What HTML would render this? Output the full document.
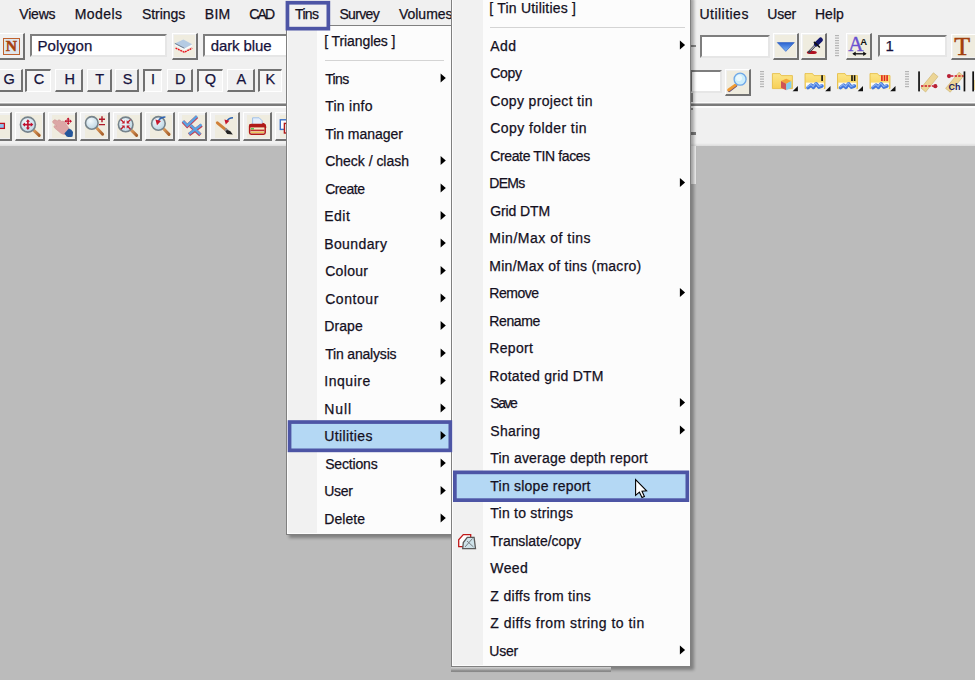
<!DOCTYPE html>
<html><head><meta charset="utf-8"><title>Tins menu</title>
<style>
html,body{margin:0;padding:0;background:#bbbbbb}
body{width:975px;height:680px;overflow:hidden;background:#bbbbbb;position:relative;
 font-family:"Liberation Sans",sans-serif;font-size:14px;color:#14101e;-webkit-text-stroke:.25px #14101e}
.a{position:absolute;white-space:nowrap}
.t{position:absolute;white-space:nowrap;line-height:20px;height:20px}
#top{left:0;top:0;width:975px;height:145px;background:#f0f0f0}
.menu{background:#fcfcfc;border:1px solid #808080;box-shadow:3px 3px 3px rgba(0,0,0,.32)}
.gut{background:#f1f1f1}
.lt{color:#16123c;-webkit-text-stroke-color:#16123c;font-size:14.5px}
.sep{height:1px;background:#d4d4d4}
.hl{background:#b4d7f3;border:4px solid #4c54a3;box-sizing:border-box}
.btn{box-sizing:border-box;background:#f0f0f0;border-top:1px solid #fff;border-left:1px solid #fff;border-right:2px solid #727272;border-bottom:2px solid #727272}
.lb{box-sizing:border-box;background:#f0f0f0;border-top:1px solid #fff;border-left:1px solid #fff;border-right:2px solid #727272;border-bottom:2px solid #727272;text-align:center;line-height:22px;font-size:15px;color:#1a1640}
.lb.dn{border-top:2px solid #727272;border-left:2px solid #727272;border-right:1px solid #fff;border-bottom:1px solid #fff;background:#f5f5f5}
.inp{box-sizing:border-box;background:#fff;border-top:2px solid #7e7e7e;border-left:2px solid #7e7e7e;border-right:2px solid #e6e6e6;border-bottom:2px solid #e6e6e6;font-size:15px;line-height:20px;color:#1a1640}
</style></head><body>
<div id="top" class="a"></div>
<div class="a" style="left:686px;top:140px;width:10px;height:44px;background:#f0f0f0"></div>
<div class="a" style="left:690px;top:45px;width:6px;height:2px;background:#8a8a8a"></div>
<div class="a" style="left:690px;top:132px;width:6px;height:3px;background:#7c7c7c"></div>
<div class="a" style="left:691px;top:91px;width:2px;height:19px;background:#909090"></div>

<svg width="0" height="0" style="position:absolute"><defs>
<radialGradient id="gl" cx="40%" cy="35%" r="70%"><stop offset="0" stop-color="#f4fafd"/><stop offset="1" stop-color="#b9d3e2"/></radialGradient>
<linearGradient id="hd" x1="0" y1="0" x2="1" y2="1"><stop offset="0" stop-color="#e0a060"/><stop offset="1" stop-color="#a8602a"/></linearGradient>
<linearGradient id="tri" x1="0" y1="0" x2="0" y2="1"><stop offset="0" stop-color="#2a62d0"/><stop offset="1" stop-color="#7db4f5"/></linearGradient>
<linearGradient id="fo" x1="0" y1="0" x2="0" y2="1"><stop offset="0" stop-color="#fce68a"/><stop offset="1" stop-color="#f7cf55"/></linearGradient>
</defs></svg>
<div class="a" style="left:0;top:102px;width:975px;height:1px;background:#fbfbfb"></div>
<div class="a" style="left:0;top:104px;width:975px;height:2px;background:#7a7a7a"></div>
<div class="a" style="left:0;top:103px;width:975px;height:1px;background:#b5b5b5"></div>
<div class="a" style="left:0;top:106px;width:975px;height:2px;background:#fcfcfc"></div>
<div class="a" style="left:0;top:143px;width:975px;height:3px;background:linear-gradient(#f0f0f0,#dcdcdc)"></div>
<div class="a btn" style="left:-3px;top:33px;width:27.5px;height:26.5px"></div><div class="a" style="left:0.0px;top:35.0px;width:0.0px;height:0.0px;background:#efecdf"></div>
<div class="a" style="left:2.5px;top:38px;width:17.5px;height:17px;box-sizing:border-box;border:1.3px solid #c0622e;background:#dfe6ec;font-family:'Liberation Serif',serif;font-weight:bold;font-size:15.5px;line-height:14.5px;text-align:center;color:#a8420e;-webkit-text-stroke:.5px #a8420e">N</div>
<div class="a inp" style="left:30.3px;top:34.3px;width:137px;height:23px"></div>
<div class="a btn" style="left:172px;top:33px;width:25.5px;height:26.7px"></div><div class="a" style="left:174.0px;top:34.6px;width:21.1px;height:22.9px;background:#efecdf"></div>
<div class="a inp" style="left:202.7px;top:34.3px;width:100px;height:23px"></div>
<div class="a inp" style="left:700.4px;top:34.5px;width:69.2px;height:23px"></div>
<div class="a btn" style="left:772.6px;top:33px;width:26px;height:26.7px"></div><div class="a" style="left:774.6px;top:34.6px;width:21.6px;height:22.9px;background:#efecdf"></div>
<div class="a btn" style="left:801.4px;top:33px;width:26px;height:26.7px"></div><div class="a" style="left:803.4px;top:34.6px;width:21.6px;height:22.9px;background:#efecdf"></div>
<svg class="a" style="left:835px;top:35px" width="4" height="24" viewBox="0 0 4 24"><rect x="0" y="0.0" width="4" height="1.2" fill="#b4b4b4"/><rect x="0" y="2.5" width="4" height="1.2" fill="#b4b4b4"/><rect x="0" y="5.0" width="4" height="1.2" fill="#b4b4b4"/><rect x="0" y="7.5" width="4" height="1.2" fill="#b4b4b4"/><rect x="0" y="10.0" width="4" height="1.2" fill="#b4b4b4"/><rect x="0" y="12.5" width="4" height="1.2" fill="#b4b4b4"/><rect x="0" y="15.0" width="4" height="1.2" fill="#b4b4b4"/><rect x="0" y="17.5" width="4" height="1.2" fill="#b4b4b4"/><rect x="0" y="20.0" width="4" height="1.2" fill="#b4b4b4"/></svg>
<div class="a btn" style="left:846.3px;top:33px;width:26px;height:26.7px"></div><div class="a" style="left:848.3px;top:34.6px;width:21.6px;height:22.9px;background:#efecdf"></div>
<div class="a inp" style="left:877.6px;top:34.5px;width:69.6px;height:22.7px"></div>
<div class="a btn" style="left:950.5px;top:33.5px;width:30px;height:26px"></div><div class="a" style="left:952.5px;top:35.1px;width:25.6px;height:22.2px;background:#efecdf"></div>
<div class="a" style="left:954.3px;top:31.6px;font-family:'Liberation Serif',serif;font-size:26px;line-height:30px;color:#a23f0c;-webkit-text-stroke:.5px #a23f0c">T</div>
<div class="a lb" style="left:-4px;top:69.3px;width:26.6px;height:22.7px"></div>
<div class="t lt" style="left:-0.8000000000000007px;top:69.2px;width:20px;text-align:center">G</div>
<div class="a lb dn" style="left:25px;top:69.3px;width:26.3px;height:22.7px"></div>
<div class="t lt" style="left:29px;top:69.2px;width:20px;text-align:center">C</div>
<div class="a lb" style="left:55.3px;top:69.3px;width:28px;height:22.7px"></div>
<div class="t lt" style="left:59.7px;top:69.2px;width:20px;text-align:center">H</div>
<div class="a lb" style="left:87px;top:69.3px;width:25px;height:22.7px"></div>
<div class="t lt" style="left:89.6px;top:69.2px;width:20px;text-align:center">T</div>
<div class="a lb" style="left:115.3px;top:69.3px;width:24px;height:22.7px"></div>
<div class="t lt" style="left:117.6px;top:69.2px;width:20px;text-align:center">S</div>
<div class="a lb dn" style="left:142.7px;top:69.3px;width:19.3px;height:22.7px"></div>
<div class="t lt" style="left:143px;top:69.2px;width:20px;text-align:center">I</div>
<div class="a lb" style="left:166.7px;top:69.3px;width:26.6px;height:22.7px"></div>
<div class="t lt" style="left:170.2px;top:69.2px;width:20px;text-align:center">D</div>
<div class="a lb dn" style="left:196.7px;top:69.3px;width:26.6px;height:22.7px"></div>
<div class="t lt" style="left:200.5px;top:69.2px;width:20px;text-align:center">Q</div>
<div class="a lb" style="left:227.3px;top:69.3px;width:27.7px;height:22.7px"></div>
<div class="t lt" style="left:231.3px;top:69.2px;width:20px;text-align:center">A</div>
<div class="a lb dn" style="left:258px;top:69.3px;width:24px;height:22.7px"></div>
<div class="t lt" style="left:260.3px;top:69.2px;width:20px;text-align:center">K</div>
<div class="a inp" style="left:690px;top:70.4px;width:32px;height:22.3px"></div>
<div class="a btn" style="left:725px;top:69.3px;width:26px;height:26.7px"></div><div class="a" style="left:727.0px;top:70.9px;width:21.6px;height:22.9px;background:#efecdf"></div>
<svg class="a" style="left:760px;top:71px" width="4" height="19.5" viewBox="0 0 4 19.5"><rect x="0" y="0.0" width="4" height="1.2" fill="#b4b4b4"/><rect x="0" y="2.5" width="4" height="1.2" fill="#b4b4b4"/><rect x="0" y="5.0" width="4" height="1.2" fill="#b4b4b4"/><rect x="0" y="7.5" width="4" height="1.2" fill="#b4b4b4"/><rect x="0" y="10.0" width="4" height="1.2" fill="#b4b4b4"/><rect x="0" y="12.5" width="4" height="1.2" fill="#b4b4b4"/><rect x="0" y="15.0" width="4" height="1.2" fill="#b4b4b4"/></svg>
<svg class="a" style="left:905px;top:71px" width="4" height="19.5" viewBox="0 0 4 19.5"><rect x="0" y="0.0" width="4" height="1.2" fill="#b4b4b4"/><rect x="0" y="2.5" width="4" height="1.2" fill="#b4b4b4"/><rect x="0" y="5.0" width="4" height="1.2" fill="#b4b4b4"/><rect x="0" y="7.5" width="4" height="1.2" fill="#b4b4b4"/><rect x="0" y="10.0" width="4" height="1.2" fill="#b4b4b4"/><rect x="0" y="12.5" width="4" height="1.2" fill="#b4b4b4"/><rect x="0" y="15.0" width="4" height="1.2" fill="#b4b4b4"/></svg>
<div class="a btn" style="left:-17px;top:112px;width:29.3px;height:29.4px"></div><div class="a" style="left:-13.0px;top:115.0px;width:22.6px;height:23.2px;background:#efecdf"></div>
<div class="a btn" style="left:15.4px;top:112px;width:29.3px;height:29.4px"></div><div class="a" style="left:19.5px;top:115.0px;width:22.6px;height:23.2px;background:#efecdf"></div>
<div class="a btn" style="left:47.9px;top:112px;width:29.3px;height:29.4px"></div><div class="a" style="left:52.0px;top:115.0px;width:22.6px;height:23.2px;background:#efecdf"></div>
<div class="a btn" style="left:80.4px;top:112px;width:29.3px;height:29.4px"></div><div class="a" style="left:84.5px;top:115.0px;width:22.6px;height:23.2px;background:#efecdf"></div>
<div class="a btn" style="left:112.9px;top:112px;width:29.3px;height:29.4px"></div><div class="a" style="left:117.0px;top:115.0px;width:22.6px;height:23.2px;background:#efecdf"></div>
<div class="a btn" style="left:145.4px;top:112px;width:29.3px;height:29.4px"></div><div class="a" style="left:149.5px;top:115.0px;width:22.6px;height:23.2px;background:#efecdf"></div>
<div class="a btn" style="left:177.9px;top:112px;width:29.3px;height:29.4px"></div><div class="a" style="left:182.0px;top:115.0px;width:22.6px;height:23.2px;background:#efecdf"></div>
<div class="a btn" style="left:210.4px;top:112px;width:29.3px;height:29.4px"></div><div class="a" style="left:214.5px;top:115.0px;width:22.6px;height:23.2px;background:#efecdf"></div>
<div class="a btn" style="left:242.9px;top:112px;width:29.3px;height:29.4px"></div><div class="a" style="left:247.0px;top:115.0px;width:22.6px;height:23.2px;background:#efecdf"></div>
<div class="a btn" style="left:275.4px;top:112px;width:29.3px;height:29.4px"></div><div class="a" style="left:279.5px;top:115.0px;width:22.6px;height:23.2px;background:#efecdf"></div>
<svg class="a" style="left:0;top:0" width="975" height="150" viewBox="0 0 975 150">
<path d="M175.6 48.1 L184.3 52.3 L192.2 48.1" fill="none" stroke="#e8101c" stroke-width="1.4" stroke-dasharray="1.9 0.7"/>
<path d="M175 45.6 L184.3 50.2 L192.2 46.2 L192.2 44.5 L184.3 48.4 L175 43.6Z" fill="#f7fbfd"/>
<path d="M174.8 43.4 L183.4 39.4 L192.2 44.3 L184.3 48.4Z" fill="#b4cbe3"/>
<path d="M174.8 43.4 L184.3 48.2" fill="none" stroke="#6e7d8e" stroke-width="1"/>
<path d="M777.3 42.6 H794.3 L785.8 51.4Z" fill="url(#tri)" stroke="#2458c0" stroke-width=".6"/>
<ellipse cx="811.8" cy="52.4" rx="5" ry="1.6" fill="#b01020"/>
<path d="M809 52 L818 42.5" stroke="#3a3a48" stroke-width="2.4" stroke-linecap="round"/>
<path d="M810.2 50.6 L815.5 45" stroke="#dfe4ee" stroke-width="1"/>
<path d="M816.2 44.2 L820.6 39.8" stroke="#14186c" stroke-width="4.6" stroke-linecap="round"/>
<path d="M814.4 42.4 L819.4 47" stroke="#111" stroke-width="1.6" stroke-linecap="round"/>
<text x="848.3" y="50.6" font-family="Liberation Serif,serif" font-size="21" fill="#6a50d0" stroke="#6a50d0" stroke-width=".4">A</text>
<text x="860.2" y="44.6" font-family="Liberation Sans,sans-serif" font-weight="bold" font-size="9.5" fill="#111">A</text>
<path d="M853.5 53.8 H865.5" stroke="#111" stroke-width="1.3"/><path d="M852.3 53.8 l3.4 -2.3 v4.6z M866.6 53.8 l-3.4 -2.3 v4.6z" fill="#111"/>
<line x1="735.8" y1="85.6" x2="729.2" y2="90.6" stroke="#5a4a80" stroke-width="3" stroke-linecap="round"/><line x1="735.6" y1="84.9" x2="728.6" y2="90" stroke="#f09a30" stroke-width="2.8" stroke-linecap="round"/>
<circle cx="740.1" cy="79.2" r="6" fill="#cdeefb" stroke="#6fa8e8" stroke-width="1.3"/>
<circle cx="739" cy="78" r="3" fill="#ffffff" opacity=".6"/>
<path d="M772.4 73.6 h7.5 l1.5 2 h11 v13 h-20z" fill="url(#fo)" stroke="#e3b93c" stroke-width="0.8"/><path d="M792.6 91.19999999999999 h5.3 v-5.2z" fill="#111"/>
<path d="M786.2 78.7 l5.2 2.4 l-5.2 2.6 l-5.2 -2.6z" fill="#f2a638"/>
<path d="M781.0 81.1 l5.2 2.6 v6.6 l-5.2 -2.6z" fill="#cf5555"/>
<path d="M791.4000000000001 81.1 l-5.2 2.6 v6.6 l5.2 -2.6z" fill="#84ccf2"/>
<path d="M805 73.6 h7.5 l1.5 2 h11 v13 h-20z" fill="url(#fo)" stroke="#e3b93c" stroke-width="0.8"/><path d="M825.2 91.19999999999999 h5.3 v-5.2z" fill="#111"/>
<rect x="805.9" y="82.6" width="18" height="6.2" fill="#fbfbf6"/><path d="M808.0 87.6 L811.1 85.2 L813.5 87.4 L816.1 83.8 L818.9 87.2 L821.9 86.0" fill="none" stroke="#4478dc" stroke-width="3.6" stroke-linecap="round" stroke-linejoin="round"/><path d="M808.0 87.6 L811.1 85.2 L813.5 87.4 L816.1 83.8 L818.9 87.2 L821.9 86.0" fill="none" stroke="#8db4f3" stroke-width="1.1" stroke-linecap="round" stroke-linejoin="round" transform="translate(-0.4,-0.8)"/>
<rect x="821.3" y="75.2" width="1.6" height="5.8" fill="#111"/>
<path d="M837.5 73.6 h7.5 l1.5 2 h11 v13 h-20z" fill="url(#fo)" stroke="#e3b93c" stroke-width="0.8"/><path d="M857.7 91.19999999999999 h5.3 v-5.2z" fill="#111"/>
<rect x="838.4" y="82.6" width="18" height="6.2" fill="#fbfbf6"/><path d="M840.5 87.6 L843.6 85.2 L846.0 87.4 L848.6 83.8 L851.4 87.2 L854.4 86.0" fill="none" stroke="#4478dc" stroke-width="3.6" stroke-linecap="round" stroke-linejoin="round"/><path d="M840.5 87.6 L843.6 85.2 L846.0 87.4 L848.6 83.8 L851.4 87.2 L854.4 86.0" fill="none" stroke="#8db4f3" stroke-width="1.1" stroke-linecap="round" stroke-linejoin="round" transform="translate(-0.4,-0.8)"/>
<rect x="853.8" y="75.2" width="1.6" height="5.8" fill="#111"/>
<rect x="851.2" y="75.2" width="1.6" height="5.8" fill="#111"/>
<path d="M870 73.6 h7.5 l1.5 2 h11 v13 h-20z" fill="url(#fo)" stroke="#e3b93c" stroke-width="0.8"/><path d="M890.2 91.19999999999999 h5.3 v-5.2z" fill="#111"/>
<rect x="870.9" y="82.6" width="18" height="6.2" fill="#fbfbf6"/><path d="M873.0 87.6 L876.1 85.2 L878.5 87.4 L881.1 83.8 L883.9 87.2 L886.9 86.0" fill="none" stroke="#4478dc" stroke-width="3.6" stroke-linecap="round" stroke-linejoin="round"/><path d="M873.0 87.6 L876.1 85.2 L878.5 87.4 L881.1 83.8 L883.9 87.2 L886.9 86.0" fill="none" stroke="#8db4f3" stroke-width="1.1" stroke-linecap="round" stroke-linejoin="round" transform="translate(-0.4,-0.8)"/>
<rect x="886.3" y="75.2" width="1.6" height="5.8" fill="#e02020"/>
<rect x="883.7" y="75.2" width="1.6" height="5.8" fill="#e02020"/>
<rect x="881.1" y="75.2" width="1.6" height="5.8" fill="#e02020"/>
<path d="M921 88 L933.4 72.8 L938 76.6 L925.6 92Z" fill="#ecd596" stroke="#c9ae6a" stroke-width=".6"/>
<rect x="918.2" y="71.4" width="1.7" height="20" fill="#111"/>
<path d="M921 86 H933.5" stroke="#d01828" stroke-width="1.6" stroke-dasharray="2.4 1.2"/><circle cx="935.3" cy="86.2" r="2.1" fill="#b82034"/>
<path d="M945.6 88.4 L959 72.2 L963.6 76 L950.2 92.2Z" fill="#ecd596" stroke="#c9ae6a" stroke-width=".6"/>
<path d="M951 76 H963.5" stroke="#d01828" stroke-width="1.6" stroke-dasharray="2.4 1.2"/><circle cx="949" cy="76.1" r="2.1" fill="#b82034"/>
<text x="948.6" y="89.6" font-family="Liberation Sans,sans-serif" font-weight="bold" font-size="9" fill="#1c1c5c">Ch</text>
<rect x="963.6" y="71.4" width="1.7" height="20" fill="#111"/>
<rect x="972.3" y="71.4" width="1.7" height="20" fill="#111"/><rect x="974" y="80" width="1" height="10" fill="#ecd596"/>
<rect x="-3" y="123.4" width="7.4" height="5" fill="#8cc4f0" stroke="#c01020" stroke-width="1.3"/>
<line x1="33.3" y1="129.8" x2="39.2" y2="135.4" stroke="url(#hd)" stroke-width="3" stroke-linecap="round"/><circle cx="27.9" cy="124.6" r="7.5" fill="url(#gl)" stroke="#76838b" stroke-width="1.6"/><path d="M23.7 124.6H32.1M27.9 120.39999999999999V128.79999999999998" stroke="#c0102e" stroke-width="1.6" fill="none"/><path d="M33.3 124.6 L30.779999999999998 122.5 L30.779999999999998 126.69999999999999Z" fill="#c0102e"/><path d="M22.5 124.6 L25.02 122.5 L25.02 126.69999999999999Z" fill="#c0102e"/><path d="M27.9 130.0 L25.799999999999997 127.48 L30.0 127.48Z" fill="#c0102e"/><path d="M27.9 119.19999999999999 L25.799999999999997 121.71999999999998 L30.0 121.71999999999998Z" fill="#c0102e"/>
<path d="M52.8 121.2 q1.2 -2.2 3 -1.2 l1.6 1 q1 -2 2.8 -0.8 l1.4 1.2 q1.4 -1 2.6 0.4 l3.6 4.6 q1.6 2.2 1.4 4 l-3.6 4 q-2.6 0.4 -5 -1.4 l-6 -5 q-1.4 -1.4 0 -2.4 l2.4 0.6 l-4 -3.4 q-0.8 -1 -0.2 -1.6z" fill="#dca6a6" stroke="#c88e8e" stroke-width=".5"/>
<path d="M64.4 133.6 l4.4 -5 q3 0.6 4.2 3.4 l-0.4 4.4 q-3 1.2 -6 0z" fill="#24559a"/>
<path d="M65.60000000000001 121.2H70.8M68.2 118.60000000000001V123.8" stroke="#c0102e" stroke-width="1.3" fill="none"/><path d="M72.0 121.2 L69.96 119.5 L69.96 122.9Z" fill="#c0102e"/><path d="M64.4 121.2 L66.44000000000001 119.5 L66.44000000000001 122.9Z" fill="#c0102e"/><path d="M68.2 125.0 L66.5 122.96 L69.9 122.96Z" fill="#c0102e"/><path d="M68.2 117.4 L66.5 119.44000000000001 L69.9 119.44000000000001Z" fill="#c0102e"/>
<line x1="96.2" y1="127.5" x2="102.6" y2="134.2" stroke="url(#hd)" stroke-width="3" stroke-linecap="round"/><circle cx="91.8" cy="122.9" r="6.3" fill="url(#gl)" stroke="#76838b" stroke-width="1.6"/>
<path d="M99 119.3 H105 M102 116.3 V122.3 M99 124.6 H105" stroke="#b01828" stroke-width="1.4" fill="none"/>
<line x1="130.8" y1="129.6" x2="136.6" y2="135.4" stroke="url(#hd)" stroke-width="3" stroke-linecap="round"/><circle cx="125.7" cy="124.4" r="7.3" fill="url(#gl)" stroke="#76838b" stroke-width="1.6"/><path d="M126.7 125.4 L129.9 125.4 L126.7 128.6Z" fill="#c01828"/><path d="M128.1 126.80000000000001 L130.5 129.20000000000002" stroke="#c01828" stroke-width="1.3"/><path d="M124.7 125.4 L121.5 125.4 L124.7 128.6Z" fill="#c01828"/><path d="M123.3 126.80000000000001 L120.9 129.20000000000002" stroke="#c01828" stroke-width="1.3"/><path d="M126.7 123.4 L129.9 123.4 L126.7 120.2Z" fill="#c01828"/><path d="M128.1 122.0 L130.5 119.60000000000001" stroke="#c01828" stroke-width="1.3"/><path d="M124.7 123.4 L121.5 123.4 L124.7 120.2Z" fill="#c01828"/><path d="M123.3 122.0 L120.9 119.60000000000001" stroke="#c01828" stroke-width="1.3"/>
<line x1="163.1" y1="128.3" x2="169" y2="134.4" stroke="url(#hd)" stroke-width="3" stroke-linecap="round"/><circle cx="158.4" cy="123.4" r="6.8" fill="url(#gl)" stroke="#76838b" stroke-width="1.6"/><path d="M165.4 117 q-5 0 -7 4" fill="none" stroke="#2e62b0" stroke-width="1.6"/><path d="M155.4 119.4 l5.6 1.6 l-4 4.2z" fill="#c8182c"/>
<path d="M183 121.6 L187.2 126 L197 116.8" fill="none" stroke="#c23a50" stroke-width="3.6"/>
<path d="M183 121 L187.2 125.4 L197 116.2" fill="none" stroke="#5aa2e2" stroke-width="2.5"/>
<path d="M189 134.6 L201.6 125.2 M190.4 125.6 L200.4 135" fill="none" stroke="#c23a50" stroke-width="3.6"/>
<path d="M189 134 L201.6 124.6 M190.4 125 L200.4 134.4" fill="none" stroke="#5aa2e2" stroke-width="2.5"/>
<path d="M217.4 122.8 L225.6 129.6" stroke="#d08038" stroke-width="3" stroke-linecap="round"/>
<path d="M225 129 L228 131.4" stroke="#8a8a90" stroke-width="3"/>
<path d="M227 130 l3.2 1 l2.6 3.6 l-5.6 -0.6 l-1.8 -2.4z" fill="#222"/>
<path d="M233 117.8 q-4.4 0 -6 3.4" fill="none" stroke="#2e62b0" stroke-width="1.6"/><path d="M224.4 119.4 l5 1.4 l-3.6 3.8z" fill="#c8182c"/>
<path d="M252.6 117.8 h6.6 l3 3 v5 h-9.6z" fill="#e4eefb" stroke="#8db4e6" stroke-width=".8"/>
<rect x="249.6" y="124.4" width="15.6" height="9.8" rx="1.6" fill="#f3e8c8" stroke="#b01a1a" stroke-width="1.5"/>
<rect x="249.6" y="124.4" width="15.6" height="3" fill="#b01a1a"/><rect x="250.4" y="129.6" width="14" height="1.6" fill="#c03030"/><rect x="251" y="128.2" width="3" height="1.2" fill="#30c040"/><rect x="251" y="131.8" width="13" height="1" fill="#e8c040"/>
<path d="M262.4 123.4 q3.4 0.6 3.2 4.6" fill="none" stroke="#b01a1a" stroke-width="1.4"/>
<rect x="280.3" y="119.8" width="9" height="9.6" fill="#fff" stroke="#3a70c8" stroke-width="1.4"/>
<rect x="284.4" y="123.4" width="9" height="9.6" fill="#f4e8e8" stroke="#b01a1a" stroke-width="1.4"/>
</svg>
<div class="t" style="left:37.5px;top:36.0px;letter-spacing:0.11px;font-size:15px;color:#16123c;-webkit-text-stroke-color:#16123c">Polygon</div>
<div class="t" style="left:210.7px;top:36.0px;letter-spacing:-0.10px;font-size:15px;color:#16123c;-webkit-text-stroke-color:#16123c">dark blue</div>
<div class="t" style="left:885.6px;top:36.0px;letter-spacing:0.00px;font-size:15px;color:#16123c;-webkit-text-stroke-color:#16123c">1</div>
<div class="t" style="left:19.3px;top:4.0px;letter-spacing:-0.20px;">Views</div>
<div class="t" style="left:74.8px;top:4.0px;letter-spacing:0.41px;">Models</div>
<div class="t" style="left:141.9px;top:4.0px;letter-spacing:-0.03px;">Strings</div>
<div class="t" style="left:204.8px;top:4.0px;letter-spacing:0.29px;">BIM</div>
<div class="t" style="left:249.3px;top:4.0px;letter-spacing:-1.82px;">CAD</div>
<div class="t" style="left:339.4px;top:4.0px;letter-spacing:-0.65px;">Survey</div>
<div class="t" style="left:399.0px;top:4.0px;letter-spacing:-0.03px;">Volumes</div>
<div class="t" style="left:699.5px;top:4.0px;letter-spacing:0.47px;">Utilities</div>
<div class="t" style="left:767.3px;top:4.0px;letter-spacing:-0.23px;">User</div>
<div class="t" style="left:814.9px;top:4.0px;letter-spacing:0.06px;">Help</div>
<div class="a menu" style="left:286px;top:25px;width:164px;height:508px"><div class="a gut" style="left:1px;top:1px;width:29px;height:506px"></div></div>
<div class="a menu" style="left:451px;top:-5px;width:238px;height:670px"><div class="a gut" style="left:1px;top:0;width:29.5px;height:669px"></div></div>
<svg class="a" style="left:284px;top:-1px" width="48" height="33" viewBox="284 -1 48 33"><rect x="287.45" y="2.75" width="40.90" height="25.90" fill="#f1f1f1" stroke="#4d55a5" stroke-width="3.7"/></svg>
<div class="t" style="left:295.0px;top:4.0px;letter-spacing:-0.64px;">Tins</div>
<div class="t" style="left:324.2px;top:31.0px;letter-spacing:-0.09px;">[ Triangles ]</div>
<div class="a sep" style="left:325px;top:60px;width:119px"></div>
<svg class="a" style="left:286px;top:419px" width="168" height="35" viewBox="286 419 168 35"><rect x="289.55" y="422.05" width="160.80" height="28.30" fill="#b4d8f4" stroke="#4d55a5" stroke-width="3.7"/></svg>
<div class="t" style="left:325.2px;top:69.0px;letter-spacing:-0.64px;">Tins</div>
<div class="t" style="left:325.2px;top:96.0px;letter-spacing:0.27px;">Tin info</div>
<div class="t" style="left:325.2px;top:124.0px;letter-spacing:-0.04px;">Tin manager</div>
<div class="t" style="left:325.2px;top:151.0px;letter-spacing:-0.02px;">Check / clash</div>
<div class="t" style="left:325.2px;top:179.0px;letter-spacing:-0.45px;">Create</div>
<div class="t" style="left:324.2px;top:206.0px;letter-spacing:0.49px;">Edit</div>
<div class="t" style="left:324.2px;top:234.0px;letter-spacing:0.40px;">Boundary</div>
<div class="t" style="left:325.2px;top:261.0px;letter-spacing:0.32px;">Colour</div>
<div class="t" style="left:325.2px;top:289.0px;letter-spacing:0.56px;">Contour</div>
<div class="t" style="left:324.2px;top:316.0px;letter-spacing:0.09px;">Drape</div>
<div class="t" style="left:325.2px;top:344.0px;letter-spacing:-0.18px;">Tin analysis</div>
<div class="t" style="left:324.2px;top:371.0px;letter-spacing:0.55px;">Inquire</div>
<div class="t" style="left:324.2px;top:399.0px;letter-spacing:0.90px;">Null</div>
<div class="t" style="left:324.2px;top:426.0px;letter-spacing:0.40px;">Utilities</div>
<div class="t" style="left:325.2px;top:454.0px;letter-spacing:-0.17px;">Sections</div>
<div class="t" style="left:324.2px;top:481.0px;letter-spacing:-0.30px;">User</div>
<div class="t" style="left:324.2px;top:509.0px;letter-spacing:0.08px;">Delete</div>
<div class="t" style="left:489.3px;top:-2.0px;letter-spacing:0.21px;">[ Tin Utilities ]</div>
<div class="a sep" style="left:490px;top:27px;width:195px"></div>
<svg class="a" style="left:452px;top:469px" width="239" height="34" viewBox="452 469 239 34"><rect x="454.85" y="472.35" width="232.50" height="27.80" fill="#b4d8f4" stroke="#4d55a5" stroke-width="3.7"/></svg>
<div class="t" style="left:490.3px;top:36.0px;letter-spacing:0.44px;">Add</div>
<div class="t" style="left:490.3px;top:63.0px;letter-spacing:-0.29px;">Copy</div>
<div class="t" style="left:490.3px;top:91.0px;letter-spacing:0.33px;">Copy project tin</div>
<div class="t" style="left:490.3px;top:118.0px;letter-spacing:0.42px;">Copy folder tin</div>
<div class="t" style="left:490.3px;top:146.0px;letter-spacing:-0.38px;">Create TIN faces</div>
<div class="t" style="left:489.3px;top:173.0px;letter-spacing:-0.70px;">DEMs</div>
<div class="t" style="left:490.3px;top:201.0px;letter-spacing:-0.13px;">Grid DTM</div>
<div class="t" style="left:489.3px;top:228.0px;letter-spacing:0.51px;">Min/Max of tins</div>
<div class="t" style="left:489.3px;top:256.0px;letter-spacing:0.26px;">Min/Max of tins (macro)</div>
<div class="t" style="left:489.3px;top:283.0px;letter-spacing:-0.47px;">Remove</div>
<div class="t" style="left:489.3px;top:311.0px;letter-spacing:-0.37px;">Rename</div>
<div class="t" style="left:489.3px;top:338.0px;letter-spacing:0.31px;">Report</div>
<div class="t" style="left:489.3px;top:366.0px;letter-spacing:0.25px;">Rotated grid DTM</div>
<div class="t" style="left:490.3px;top:393.0px;letter-spacing:-1.47px;">Save</div>
<div class="t" style="left:490.3px;top:421.0px;letter-spacing:0.26px;">Sharing</div>
<div class="t" style="left:490.3px;top:448.0px;letter-spacing:0.20px;">Tin average depth report</div>
<div class="t" style="left:490.3px;top:476.0px;letter-spacing:0.23px;">Tin slope report</div>
<div class="t" style="left:490.3px;top:503.0px;letter-spacing:0.23px;">Tin to strings</div>
<div class="t" style="left:490.3px;top:531.0px;letter-spacing:-0.05px;">Translate/copy</div>
<div class="t" style="left:490.3px;top:558.0px;letter-spacing:0.39px;">Weed</div>
<div class="t" style="left:490.3px;top:586.0px;letter-spacing:0.32px;">Z diffs from tins</div>
<div class="t" style="left:490.3px;top:613.0px;letter-spacing:0.47px;">Z diffs from string to tin</div>
<div class="t" style="left:489.3px;top:641.0px;letter-spacing:-0.23px;">User</div>
<div class="a" style="left:451px;top:667px;width:160px;height:5px;background:linear-gradient(#d2d2d2,#b0b0b0 45%,#858585 80%,#8c8c8c)"></div>
<svg class="a" style="left:455px;top:531px" width="24" height="21" viewBox="455 531 24 21"><path d="M458.7 546.6 V539.8 L463.3 534.6 H470.7 V546.6Z" fill="#fff" stroke="#c01a1a" stroke-width="1.3"/><path d="M462.7 548.6 L463.3 542.6 L467.3 537.3 H474.1 L475.5 548.6Z" fill="#cfe3ea" stroke="#5a5a5a" stroke-width="1.3"/><path d="M465 547 L472.5 538.5 M467 541 L473.5 547" stroke="#7a7f84" stroke-width="1"/></svg>
<svg class="a" style="left:0;top:0" width="975" height="680" viewBox="0 0 975 680"><path d="M440.6 73.4 L445.8 77.9 L440.6 82.4Z" fill="#000"/><path d="M440.6 155.9 L445.8 160.4 L440.6 164.9Z" fill="#000"/><path d="M440.6 183.4 L445.8 187.9 L440.6 192.4Z" fill="#000"/><path d="M440.6 210.9 L445.8 215.4 L440.6 219.9Z" fill="#000"/><path d="M440.6 238.4 L445.8 242.9 L440.6 247.4Z" fill="#000"/><path d="M440.6 265.9 L445.8 270.4 L440.6 274.9Z" fill="#000"/><path d="M440.6 293.4 L445.8 297.9 L440.6 302.4Z" fill="#000"/><path d="M440.6 320.9 L445.8 325.4 L440.6 329.9Z" fill="#000"/><path d="M440.6 348.4 L445.8 352.9 L440.6 357.4Z" fill="#000"/><path d="M440.6 375.9 L445.8 380.4 L440.6 384.9Z" fill="#000"/><path d="M440.6 403.4 L445.8 407.9 L440.6 412.4Z" fill="#000"/><path d="M440.6 430.9 L445.8 435.4 L440.6 439.9Z" fill="#000"/><path d="M440.6 458.4 L445.8 462.9 L440.6 467.4Z" fill="#000"/><path d="M440.6 485.9 L445.8 490.4 L440.6 494.9Z" fill="#000"/><path d="M440.6 513.4 L445.8 517.9 L440.6 522.4Z" fill="#000"/><path d="M679.9 40.5 L685.1 45.0 L679.9 49.5Z" fill="#000"/><path d="M679.9 178.0 L685.1 182.5 L679.9 187.0Z" fill="#000"/><path d="M679.9 288.0 L685.1 292.5 L679.9 297.0Z" fill="#000"/><path d="M679.9 398.0 L685.1 402.5 L679.9 407.0Z" fill="#000"/><path d="M679.9 425.5 L685.1 430.0 L679.9 434.5Z" fill="#000"/><path d="M679.9 645.5 L685.1 650.0 L679.9 654.5Z" fill="#000"/></svg>
<svg class="a" style="left:630px;top:474px" width="24" height="30" viewBox="630 474 24 30"><path d="M635.6 479.6 V495.4 L639.4 492.2 L642 497.6 L644.4 496.5 L642 491.3 L646.6 490.9Z" fill="#fff" stroke="#000" stroke-width="1.1" stroke-linejoin="miter"/></svg>
</body></html>
